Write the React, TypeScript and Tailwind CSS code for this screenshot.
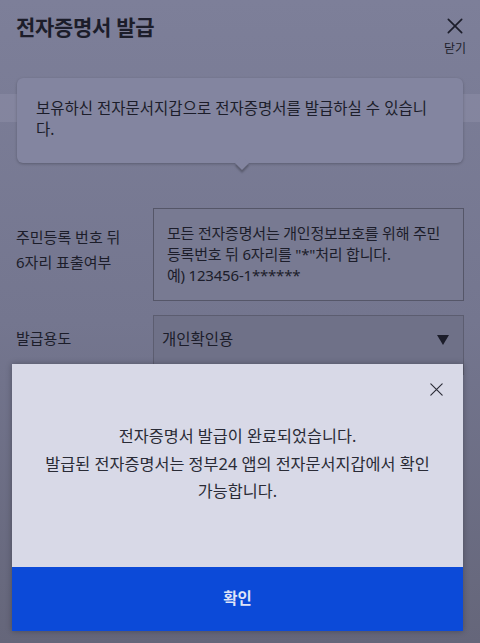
import React from 'react';

const CloseIcon = ({ size, stroke }: { size: number; stroke: number }) => (
  <svg width={size} height={size} viewBox="0 0 24 24" fill="none" stroke="currentColor" strokeWidth={stroke} strokeLinecap="round">
    <path d="M4 4 L20 20 M20 4 L4 20" />
  </svg>
);

const App = () => {
  return (
    <div
      className="relative h-[643px] w-[480px] overflow-hidden bg-gradient-to-b from-[#7d7f99] via-[#74768f] to-[#65667a] text-[#1c1d2a]"
      style={{ fontFamily: '"Noto Sans", "Noto Sans CJK KR", sans-serif' }}
    >
      {/* 헤더 */}
      <div className="flex items-start justify-between pl-4 pr-[14px] pt-[12px]">
        <h1 className="text-[21px] font-bold leading-[30px] tracking-[-0.3px]">전자증명서 발급</h1>
        <div className="flex flex-col items-center pt-[4px]">
          <CloseIcon size={20} stroke={2} />
          <span className="mt-[6px] text-[12px] leading-[14px]">닫기</span>
        </div>
      </div>

      {/* 안내 말풍선 */}
      <div className="relative mt-[22px]">
        <div className="absolute left-0 right-0 top-[16px] h-[28px] bg-[#8a8ca5] opacity-60" />
        <div className="relative mx-[17px] rounded-[6px] bg-[#8385a0] px-[19px] pb-[23px] pt-[20px] shadow-[0_1px_3px_rgba(0,0,0,0.25)]">
          <p className="text-[15.5px] leading-[21px]">
            보유하신 전자문서지갑으로 전자증명서를 발급하실 수 있습니
            <br />
            다.
          </p>
          <div className="absolute left-[220px] top-full h-[10px] w-[10px] -translate-y-[5px] rotate-45 bg-[#8385a0] shadow-[2px_2px_2px_rgba(0,0,0,0.25)]" />
        </div>
      </div>

      {/* 주민등록번호 */}
      <div className="mt-[45px] flex pl-4 pr-[16px]">
        <div className="w-[137px] pt-[17px] text-[15px] leading-[25px]">
          주민등록 번호 뒤
          <br />
          6자리 표출여부
        </div>
        <div className="flex-1 whitespace-nowrap border border-[#555668] bg-[#787a92] py-[14px] pl-[13px] pr-[6px] text-[15px] leading-[21px] tracking-[-0.2px]">
          모든 전자증명서는 개인정보보호를 위해 주민
          <br />
          등록번호 뒤 6자리를 "*"처리 합니다.
          <br />
          예) 123456-1******
        </div>
      </div>

      {/* 발급용도 */}
      <div className="mt-[14px] flex pl-4 pr-[16px]">
        <div className="w-[137px] pt-[11px] text-[15px] leading-[24px]">발급용도</div>
        <div className="flex h-[60px] flex-1 items-start justify-between border border-[#5c5d70] bg-[#6f7188] pl-[8px] pr-[14px] pt-[11px]">
          <span className="text-[15.5px] leading-[24px]">개인확인용</span>
          <svg width="12" height="10" viewBox="0 0 12 10" className="mt-[8px]">
            <path d="M0 0 H12 L6 10 Z" fill="#1c1d2a" />
          </svg>
        </div>
      </div>

      {/* 완료 모달 */}
      <div className="absolute left-[12px] top-[364px] flex h-[267px] w-[451px] flex-col bg-[#d8d9e7] shadow-[0_0_6px_rgba(0,0,0,0.3)]">
        <div className="flex justify-end pr-[18px] pt-[17px] text-[#2a2b36]">
          <CloseIcon size={17} stroke={1.6} />
        </div>
        <div className="flex-1 pt-[25px] text-center text-[16.3px] leading-[27.5px] text-[#2a2b36]">
          전자증명서 발급이 완료되었습니다.
          <br />
          발급된 전자증명서는 정부24 앱의 전자문서지갑에서 확인
          <br />
          가능합니다.
        </div>
        <button className="flex h-[64px] items-center justify-center bg-[#0c4ad8] text-[15.5px] font-bold text-[#dfe4f7]">
          확인
        </button>
      </div>
    </div>
  );
};

export default App;
